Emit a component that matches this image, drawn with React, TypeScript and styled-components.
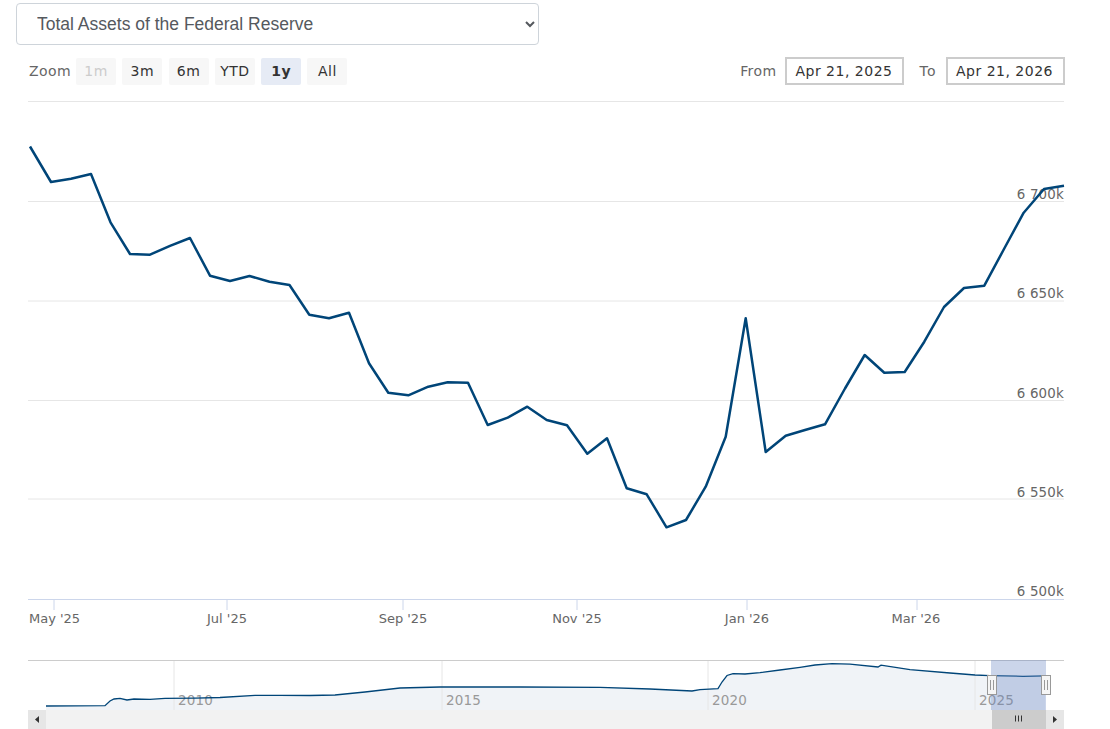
import React from 'react';
import styled, { createGlobalStyle } from 'styled-components';

const GlobalStyle = createGlobalStyle`
  html, body {
    margin: 0;
    padding: 0;
    background: #fff;
    overflow: hidden;
  }
`;

const CHART_FONT = '"DejaVu Sans", Verdana, sans-serif';

const Page = styled.div`
  width: 1110px;
  height: 729px;
  font-family: ${CHART_FONT};
`;

const SeriesSelect = styled.select`
  display: block;
  box-sizing: border-box;
  width: 523px;
  height: 42px;
  margin: 3px 0 0 16px;
  padding: 0 12px 0 16px;
  border: 1px solid #ced4da;
  border-radius: 4px;
  background-color: #fff;
  color: #55595e;
  font-family: "Liberation Sans", Arial, sans-serif;
  font-size: 17.5px;
`;

const Toolbar = styled.div`
  display: flex;
  align-items: center;
  justify-content: space-between;
  box-sizing: border-box;
  width: 1065px;
  height: 28px;
  margin-top: 12px;
  padding-left: 29px;
`;

const ToolGroup = styled.div`
  display: flex;
  align-items: center;
`;

const ToolLabel = styled.span`
  color: #666;
  font-size: 14px;
  letter-spacing: 0.4px;
`;

const ZoomLabel = styled(ToolLabel)`
  width: 47px;
`;

const RangeButton = styled.button<{ $active?: boolean; $disabled?: boolean }>`
  width: 40px;
  height: 27px;
  padding: 0;
  margin-right: 6.3px;
  border: 0;
  border-radius: 2px;
  background: ${(p) => (p.$active ? '#e6ebf5' : '#f7f7f7')};
  color: ${(p) => (p.$disabled ? '#ccc' : '#333')};
  font-family: inherit;
  font-size: 14px;
  letter-spacing: 0.5px;
  font-weight: ${(p) => (p.$active ? 700 : 400)};
`;

const DateInput = styled.div`
  box-sizing: border-box;
  width: 119px;
  height: 28px;
  margin-left: 9px;
  padding-right: 2px;
  border: 2px solid #ccc;
  color: #333;
  font-size: 14px;
  letter-spacing: 0.5px;
  line-height: 24px;
  text-align: center;
`;

const ToLabel = styled(ToolLabel)`
  margin-left: 15px;
  letter-spacing: 1.4px;
`;

const ChartSvg = styled.svg`
  display: block;
  width: 1110px;
`;

const XLabel = styled.text`
  fill: #666;
  font-family: ${CHART_FONT};
  font-size: 13px;
`;

const YLabel = styled.text`
  fill: #666;
  font-family: ${CHART_FONT};
  font-size: 13.4px;
  letter-spacing: 0.2px;
`;

const NavYear = styled.text`
  fill: #999;
  font-family: ${CHART_FONT};
  font-size: 13.5px;
  letter-spacing: 0.2px;
`;

const ranges = ['1m', '3m', '6m', 'YTD', '1y', 'All'];

const series: [number, number][] = [
  [30, 146.5], [51, 182], [71, 178.7], [91, 174], [110.5, 222.3], [130, 254],
  [150, 254.7], [170, 245.9], [190, 238], [210, 275.7], [230, 281], [249.5, 276],
  [269.5, 281.7], [289.5, 285], [309.3, 314.7], [329, 318.3], [349, 312.7], [369, 363.3],
  [388.3, 392.7], [408.3, 395.3], [428.3, 386.7], [447.7, 382.3], [468, 382.7], [487.7, 425],
  [507.7, 417.7], [527.3, 406.7], [546.7, 420], [567, 425.3], [587.3, 453.7], [607, 438.3],
  [626.7, 488.3], [646.7, 494.3], [666.5, 527.3], [686, 520], [705.7, 486.7], [725.7, 436.7],
  [745.7, 318.3], [765.7, 452], [785.7, 435.7], [805, 430], [825, 424.3], [845, 388.5],
  [864.7, 355], [884.3, 372.7], [904.7, 372], [924.3, 341.7], [944, 307], [964, 288],
  [984.3, 285.7], [1004, 249], [1023.7, 212.7], [1044, 189], [1064, 185.8],
];

const overview: [number, number][] = [
  [46, 706], [105, 705.7], [110, 701], [114, 699], [120, 698.4], [127, 700], [134, 699],
  [150, 699.3], [165, 698.4], [195, 698.2], [220, 697.5], [255, 695.4], [280, 695.4],
  [310, 695.5], [335, 695], [365, 692], [400, 688], [440, 687], [520, 687], [600, 687.4],
  [650, 689], [692, 691], [700, 689.6], [718, 688.6], [722, 682], [727, 675.5], [733, 673.6],
  [745, 674], [760, 672.7], [780, 670], [800, 667.3], [815, 665], [832, 663.7], [850, 664.2],
  [878, 667], [881, 665.2], [910, 669.6], [950, 673], [975, 675], [990, 675.6], [1023, 676.3],
  [1045, 675.8],
];

const toPoints = (pts: [number, number][]) => pts.map(([x, y]) => `${x},${y}`).join(' ');

const gridLines = [101.5, 201.5, 301, 400.5, 499];
const yLabels: [string, number][] = [
  ['6 700k', 199], ['6 650k', 298], ['6 600k', 398], ['6 550k', 497], ['6 500k', 596],
];
const xTicks = [54, 227, 403, 577, 747, 917];
const xLabels: [string, number, 'start' | 'middle'][] = [
  ["May '25", 29, 'start'], ["Jul '25", 227, 'middle'], ["Sep '25", 403, 'middle'],
  ["Nov '25", 577, 'middle'], ["Jan '26", 747, 'middle'], ["Mar '26", 916, 'middle'],
];
const navTicks: [string, number][] = [['2010', 174], ['2015', 442], ['2020', 708], ['2025', 975]];

const NavHandle: React.FC<{ x: number }> = ({ x }) => (
  <g>
    <rect x={x} y={675.5} width={9} height={19} fill="#f5f5f5" stroke="#999" />
    <path d={`M${x + 3} 680v10M${x + 6} 680v10`} stroke="#999" fill="none" />
  </g>
);

const App: React.FC = () => (
  <Page>
    <GlobalStyle />
    <SeriesSelect defaultValue="assets">
      <option value="assets">Total Assets of the Federal Reserve</option>
    </SeriesSelect>
    <Toolbar>
      <ToolGroup>
        <ZoomLabel>Zoom</ZoomLabel>
        {ranges.map((r) => (
          <RangeButton key={r} $active={r === '1y'} $disabled={r === '1m'}>
            {r}
          </RangeButton>
        ))}
      </ToolGroup>
      <ToolGroup>
        <ToolLabel>From</ToolLabel>
        <DateInput>Apr 21, 2025</DateInput>
        <ToLabel>To</ToLabel>
        <DateInput>Apr 21, 2026</DateInput>
      </ToolGroup>
    </Toolbar>
    <ChartSvg width={1110} height={644} viewBox="0 85 1110 644">
      {gridLines.map((y) => (
        <line key={y} x1={28} x2={1064} y1={y} y2={y} stroke="#e6e6e6" />
      ))}
      <line x1={28} x2={1064} y1={599.5} y2={599.5} stroke="#ccd6eb" />
      {xTicks.map((x) => (
        <line key={x} x1={x} x2={x} y1={600} y2={610} stroke="#ccd6eb" />
      ))}
      {xLabels.map(([t, x, anchor]) => (
        <XLabel key={t} x={x} y={623} textAnchor={anchor}>{t}</XLabel>
      ))}
      {yLabels.map(([t, y]) => (
        <YLabel key={t} x={1064} y={y} textAnchor="end">{t}</YLabel>
      ))}
      <polyline points={toPoints(series)} fill="none" stroke="#004578" strokeWidth={2.5} strokeLinejoin="round" />

      <line x1={28} x2={1064} y1={660.5} y2={660.5} stroke="#cccccc" />
      <polygon points={`46,710 ${toPoints(overview)} 1045,710`} fill="#f0f3f7" />
      {navTicks.map(([t, x]) => (
        <g key={t}>
          <line x1={x} x2={x} y1={661} y2={710} stroke="#e6e6e6" />
          <NavYear x={x + 4} y={705}>{t}</NavYear>
        </g>
      ))}
      <polyline points={toPoints(overview)} fill="none" stroke="#004578" strokeWidth={1.3} />
      <rect x={991} y={660} width={55} height={50} fill="rgba(102,133,194,0.34)" />
      <NavHandle x={987.5} />
      <NavHandle x={1041.5} />

      <rect x={28} y={710} width={1036} height={19} fill="#f2f2f2" />
      <rect x={28} y={710} width={18} height={19} fill="#e6e6e6" />
      <rect x={1046} y={710} width={18} height={19} fill="#e6e6e6" />
      <rect x={992} y={710} width={54} height={19} fill="#cccccc" />
      <path d="M1015.5 715.5v6M1018.5 715.5v6M1021.5 715.5v6" stroke="#333" fill="none" />
      <path d="M39 716v7l-4 -3.5z" fill="#333" />
      <path d="M1053 716v7l4 -3.5z" fill="#333" />
    </ChartSvg>
  </Page>
);

export default App;
